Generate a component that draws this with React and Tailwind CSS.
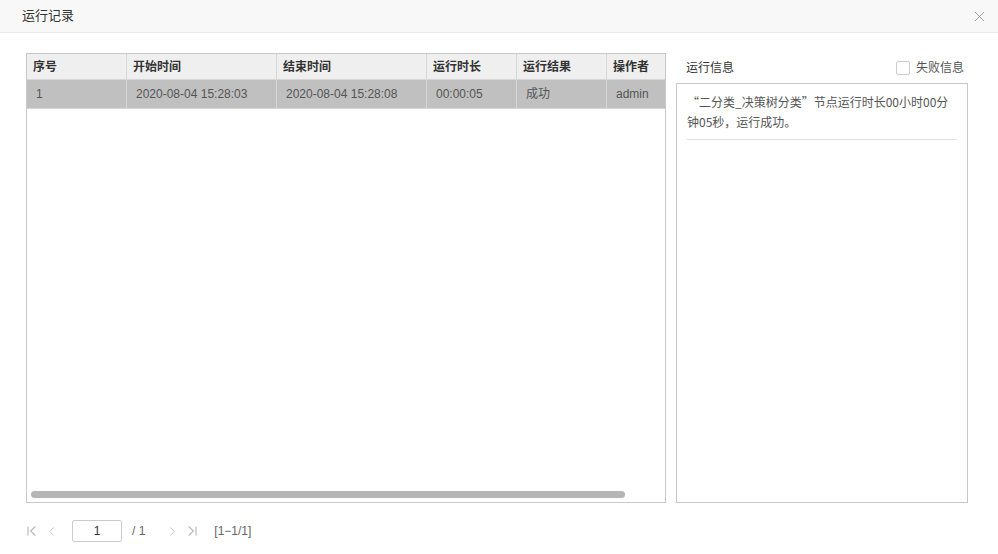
import { X, ChevronLeft, ChevronRight } from 'lucide-react';

const cols = [
  { key: 'no', label: '序号', w: 'w-[100px]' },
  { key: 'start', label: '开始时间', w: 'w-[150px]' },
  { key: 'end', label: '结束时间', w: 'w-[150px]' },
  { key: 'dur', label: '运行时长', w: 'w-[90px]' },
  { key: 'res', label: '运行结果', w: 'w-[90px]' },
  { key: 'op', label: '操作者', w: 'w-[90px]' },
];

const rows = [
  { no: '1', start: '2020-08-04 15:28:03', end: '2020-08-04 15:28:08', dur: '00:00:05', res: '成功', op: 'admin' },
];

function FirstIcon() {
  return (
    <svg width="12" height="12" viewBox="0 0 12 12" fill="none" stroke="#b8b8b8" strokeWidth="1.1">
      <path d="M2 1.5v9" />
      <path d="M9.5 1.5L4.5 6l5 4.5" />
    </svg>
  );
}

function LastIcon() {
  return (
    <svg width="12" height="12" viewBox="0 0 12 12" fill="none" stroke="#b8b8b8" strokeWidth="1.1">
      <path d="M10 1.5v9" />
      <path d="M2.5 1.5L7.5 6l-5 4.5" />
    </svg>
  );
}

export default function App() {
  return (
    <div className="w-[998px] h-[554px] bg-white text-[12px] text-[#333] font-['Liberation_Sans','Noto_Sans_CJK_SC',sans-serif] flex flex-col">
      {/* titre */}
      <div className="h-[33px] shrink-0 bg-[#f8f8f8] border-b border-[#e8e8e8] flex items-center justify-between pl-[22px] pr-[10px]">
        <span className="text-[13px] text-[#333]">运行记录</span>
        <X size={17} strokeWidth={1.1} className="text-[#888]" />
      </div>

      <div className="flex pl-[26px] pt-[20px] gap-[10px]">
        {/* tableau */}
        <div className="w-[640px] h-[450px] border border-[#c8c8c8] flex flex-col overflow-hidden">
          <div className="flex-1 overflow-hidden">
            <div className="flex bg-[#efefef] h-[26px] border-b border-[#d6d6d6]">
              {cols.map((c) => (
                <div
                  key={c.key}
                  className={`${c.w} shrink-0 border-r border-[#d6d6d6] pl-[6px] flex items-center font-bold text-[#333]`}
                >
                  {c.label}
                </div>
              ))}
            </div>
            {rows.map((r) => (
              <div key={r.no} className="flex bg-[#c0c0c0] h-[29px] border-b border-[#d6d6d6]">
                {cols.map((c) => (
                  <div
                    key={c.key}
                    className={`${c.w} shrink-0 border-r border-[#d6d6d6] pl-[9px] flex items-center text-[#555]`}
                  >
                    {r[c.key]}
                  </div>
                ))}
              </div>
            ))}
          </div>
          <div className="h-[14px] shrink-0 px-[4px] pt-[3px]">
            <div className="w-[594px] h-[7px] rounded-full bg-[#b5b5b5]" />
          </div>
        </div>

        {/* infos */}
        <div className="w-[292px] flex flex-col">
          <div className="h-[30px] flex items-center justify-between pl-[10px] pr-[4px]">
            <span className="text-[#333]">运行信息</span>
            <label className="flex items-center gap-[6px] text-[#555]">
              <span className="w-[14px] h-[14px] border border-[#ccc] rounded-[2px] bg-white" />
              失败信息
            </label>
          </div>
          <div className="flex-1 border border-[#c8c8c8] px-[10px] pt-[8px]">
            <p className="leading-[20px] text-[#555] pb-[7px] border-b border-[#e2e2e2] font-['Noto_Sans_CJK_SC','Liberation_Sans',sans-serif]">
              “二分类_决策树分类”节点运行时长00小时00分钟05秒，运行成功。
            </p>
          </div>
        </div>
      </div>

      {/* pagination */}
      <div className="flex items-center pl-[26px] pt-[17px] text-[#666]">
        <FirstIcon />
        <ChevronLeft size={15} strokeWidth={1.2} className="text-[#b8b8b8] ml-[6px]" />
        <div className="ml-[13px] w-[50px] h-[22px] border border-[#ccc] rounded-[2px] flex items-center justify-center text-[#333]">
          1
        </div>
        <span className="ml-[10px]">/ 1</span>
        <ChevronRight size={15} strokeWidth={1.2} className="text-[#b8b8b8] ml-[20px]" />
        <span className="ml-[6px]"><LastIcon /></span>
        <span className="ml-[16px]">[1−1/1]</span>
      </div>
    </div>
  );
}
